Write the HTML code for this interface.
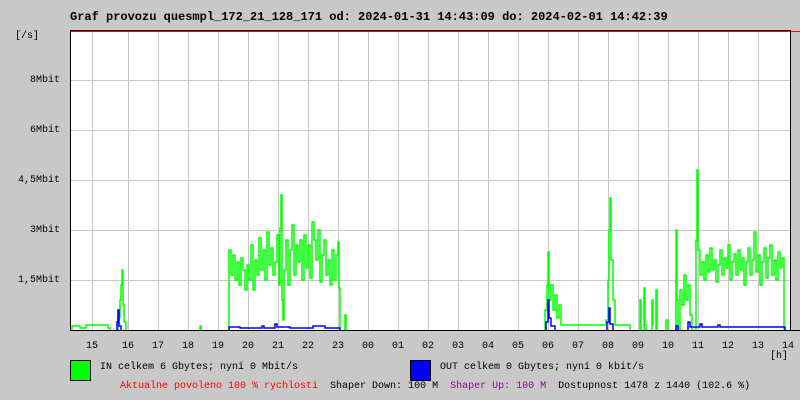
<!DOCTYPE html>
<html><head><meta charset="utf-8"><style>
html,body{margin:0;padding:0;background:#c8c8c8;}
body{width:800px;height:400px;position:relative;overflow:hidden;font-family:"Liberation Mono",monospace;font-size:10px;color:#000;}
.t{position:absolute;white-space:pre;line-height:12px;}
.y{position:absolute;right:740px;white-space:pre;line-height:12px;text-align:right;}
</style></head><body>
<svg width="800" height="400" style="position:absolute;left:0;top:0">
<rect x="70" y="31" width="720" height="299" fill="#fff"/>
<g stroke="#c8c8c8" stroke-width="1" shape-rendering="crispEdges">
<line x1="92.5" y1="31" x2="92.5" y2="330"/>
<line x1="128.5" y1="31" x2="128.5" y2="330"/><line x1="158.5" y1="31" x2="158.5" y2="330"/><line x1="188.5" y1="31" x2="188.5" y2="330"/><line x1="218.5" y1="31" x2="218.5" y2="330"/><line x1="248.5" y1="31" x2="248.5" y2="330"/><line x1="278.5" y1="31" x2="278.5" y2="330"/><line x1="308.5" y1="31" x2="308.5" y2="330"/><line x1="338.5" y1="31" x2="338.5" y2="330"/><line x1="368.5" y1="31" x2="368.5" y2="330"/><line x1="398.5" y1="31" x2="398.5" y2="330"/><line x1="428.5" y1="31" x2="428.5" y2="330"/><line x1="458.5" y1="31" x2="458.5" y2="330"/><line x1="488.5" y1="31" x2="488.5" y2="330"/><line x1="518.5" y1="31" x2="518.5" y2="330"/><line x1="548.5" y1="31" x2="548.5" y2="330"/><line x1="578.5" y1="31" x2="578.5" y2="330"/><line x1="608.5" y1="31" x2="608.5" y2="330"/><line x1="638.5" y1="31" x2="638.5" y2="330"/><line x1="668.5" y1="31" x2="668.5" y2="330"/><line x1="698.5" y1="31" x2="698.5" y2="330"/><line x1="728.5" y1="31" x2="728.5" y2="330"/><line x1="758.5" y1="31" x2="758.5" y2="330"/>
<line x1="70" y1="80.5" x2="790" y2="80.5"/><line x1="70" y1="130.5" x2="790" y2="130.5"/><line x1="70" y1="180.5" x2="790" y2="180.5"/><line x1="70" y1="230.5" x2="790" y2="230.5"/><line x1="70" y1="280.5" x2="790" y2="280.5"/>
</g>
<g fill="none" stroke="#00ff00" stroke-width="1.5">
<path d="M72,330 V326 H80 V328 H86 V325 H108 V328 H110 V330"/>
<path d="M118,330 V318 H120 V300 H121 V285 H122 V270 H123 V305 H124 V322 H126 V330"/>
<path d="M200,330 V326 H201 V330"/>
<path d="M229,330 V250 H231 V275 H233 V255 H235 V280 H237 V262 H239 V285 H241 V258 H243 V270 H245 V290 H247 V265 H249 V280 H251 V245 H253 V290 H255 V260 H257 V275 H259 V238 H261 V270 H263 V250 H265 V280 H267 V232 H269 V265 H271 V248 H273 V275 H275 V262 H277 V235 H279 V285 H280 V228 H281 V195 H282 V300 H283 V320 H284 V270 H286 V240 H288 V285 H290 V250 H292 V225 H294 V275 H296 V245 H298 V262 H300 V240 H302 V280 H304 V235 H306 V268 H308 V245 H310 V278 H312 V222 H314 V240 H316 V260 H318 V230 H320 V282 H322 V255 H324 V240 H326 V275 H328 V260 H330 V285 H332 V250 H334 V280 H336 V255 H338 V242 H339 V288 H340 V330"/>
<path d="M345,330 V315 H346 V330"/>
<path d="M545,330 V310 H547 V285 H548 V252 H549 V300 H551 V285 H553 V310 H555 V295 H557 V318 H559 V305 H561 V325 H606 V320 H608 V280 H609 V230 H610 V198 H611 V260 H613 V300 H615 V325 H630 V330"/>
<path d="M640,330 V300 H641 V330 M644,330 V288 H645 V325 H646 V330 M652,330 V300 H653 V325 M656,330 V290 H657 V330 M666,330 V320 H668 V330 M676,330 V230 H677 V300 H678 V330 M680,330 V290 H682 V305 H684 V275 H686 V300 H688 V285 H690 V315 H692 V330"/>
<path d="M696,330 V240 H697 V170 H698 V250 H700 V275 H702 V262 H704 V280 H706 V255 H708 V272 H710 V248 H712 V270 H714 V260 H716 V282 H718 V265 H720 V250 H722 V275 H724 V258 H726 V268 H728 V245 H730 V280 H732 V262 H734 V254 H736 V275 H738 V250 H740 V270 H742 V258 H744 V285 H746 V262 H748 V248 H750 V275 H752 V260 H754 V232 H756 V272 H758 V255 H760 V285 H762 V262 H764 V248 H766 V278 H768 V258 H770 V245 H772 V275 H774 V260 H776 V280 H778 V252 H780 V268 H782 V258 H784 V330"/>
</g>
<g fill="none" stroke="#0000ff" stroke-width="1.5">
<path d="M117,330 V322 H118 V310 H119 V326 H121 V330"/>
<path d="M229,330 V327 H240 V328 H262 V326 H264 V328 H275 V324 H277 V327 H290 V328 H313 V326 H325 V328 H340 V330"/>
<path d="M546,330 V322 H548 V300 H549 V318 H551 V326 H555 V330 M607,330 V322 H609 V308 H610 V324 H613 V330"/>
<path d="M676,330 V326 H678 V330 M688,330 V322 H690 V327 H700 V324 H702 V327 H718 V325 H720 V327 H785 V330"/>
</g>
<g shape-rendering="crispEdges">
<line x1="70" y1="31.5" x2="800" y2="31.5" stroke="#ff0000"/>
<line x1="70" y1="30.5" x2="790" y2="30.5" stroke="#000"/>
<line x1="70.5" y1="30" x2="70.5" y2="331" stroke="#000"/>
<line x1="790.5" y1="30" x2="790.5" y2="331" stroke="#000"/>
<line x1="70" y1="330.5" x2="800" y2="330.5" stroke="#000"/>
<rect x="70.5" y="360.5" width="20" height="20" fill="#00ff00" stroke="#000"/>
<rect x="410.5" y="360.5" width="20" height="20" fill="#0000ff" stroke="#000"/>
</g>
</svg>
<div class="t" style="left:70px;top:10px;font-size:12px;font-weight:bold;line-height:14px">Graf provozu quesmpl_172_21_128_171 od: 2024-01-31 14:43:09 do: 2024-02-01 14:42:39</div>
<div class="t" style="left:15px;top:31px">[/s]</div>
<div class="y" style="top:75px">8Mbit</div>
<div class="y" style="top:125px">6Mbit</div>
<div class="y" style="top:175px">4,5Mbit</div>
<div class="y" style="top:225px">3Mbit</div>
<div class="y" style="top:275px">1,5Mbit</div>
<div class="t" style="left:86px;top:341px">15</div>
<div class="t" style="left:122px;top:341px">16</div>
<div class="t" style="left:152px;top:341px">17</div>
<div class="t" style="left:182px;top:341px">18</div>
<div class="t" style="left:212px;top:341px">19</div>
<div class="t" style="left:242px;top:341px">20</div>
<div class="t" style="left:272px;top:341px">21</div>
<div class="t" style="left:302px;top:341px">22</div>
<div class="t" style="left:332px;top:341px">23</div>
<div class="t" style="left:362px;top:341px">00</div>
<div class="t" style="left:392px;top:341px">01</div>
<div class="t" style="left:422px;top:341px">02</div>
<div class="t" style="left:452px;top:341px">03</div>
<div class="t" style="left:482px;top:341px">04</div>
<div class="t" style="left:512px;top:341px">05</div>
<div class="t" style="left:542px;top:341px">06</div>
<div class="t" style="left:572px;top:341px">07</div>
<div class="t" style="left:602px;top:341px">08</div>
<div class="t" style="left:632px;top:341px">09</div>
<div class="t" style="left:662px;top:341px">10</div>
<div class="t" style="left:692px;top:341px">11</div>
<div class="t" style="left:722px;top:341px">12</div>
<div class="t" style="left:752px;top:341px">13</div>
<div class="t" style="left:782px;top:341px">14</div>
<div class="t" style="left:770px;top:351px">[h]</div>
<div class="t" style="left:100px;top:362px">IN celkem 6 Gbytes; nyní 0 Mbit/s</div>
<div class="t" style="left:440px;top:362px">OUT celkem 0 Gbytes; nyní 0 kbit/s</div>
<div class="t" style="left:120px;top:381px"><span style="color:#ff0000">Aktualne povoleno 100 % rychlosti</span>  Shaper Down: 100 M  <span style="color:#990099">Shaper Up: 100 M</span>  Dostupnost 1478 z 1440 (102.6 %)</div>
</body></html>
